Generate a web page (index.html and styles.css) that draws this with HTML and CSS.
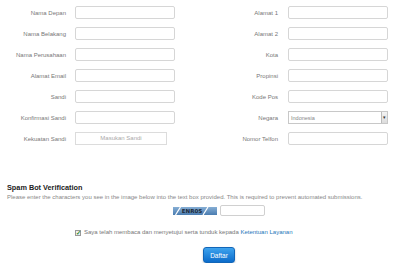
FILE: index.html
```html
<!DOCTYPE html>
<html lang="en">
<head>
    <meta charset="UTF-8">
    <title>Daftar</title>
    <link rel="stylesheet" href="styles.css">
</head>
<body>
    <div class="form-grid">
        <div class="col col-left">
            <div class="row"><label>Nama Depan</label><input type="text"></div>
            <div class="row"><label>Nama Belakang</label><input type="text"></div>
            <div class="row"><label>Nama Perusahaan</label><input type="text"></div>
            <div class="row"><label>Alamat Email</label><input type="text"></div>
            <div class="row"><label>Sandi</label><input type="password"></div>
            <div class="row"><label>Konfirmasi Sandi</label><input type="password"></div>
            <div class="row"><label>Kekuatan Sandi</label><div class="strength">Masukan Sandi</div></div>
        </div>
        <div class="col col-right">
            <div class="row"><label>Alamat 1</label><input type="text"></div>
            <div class="row"><label>Alamat 2</label><input type="text"></div>
            <div class="row"><label>Kota</label><input type="text"></div>
            <div class="row"><label>Propinsi</label><input type="text"></div>
            <div class="row"><label>Kode Pos</label><input type="text"></div>
            <div class="row"><label>Negara</label>
                <div class="select"><span>Indonesia</span><span class="arrow">&#9662;</span></div>
            </div>
            <div class="row"><label>Nomor Telfon</label><input type="text"></div>
        </div>
    </div>

    <div class="spam">
        <h3>Spam Bot Verification</h3>
        <p>Please enter the characters you see in the image below into the text box provided. This is required to prevent automated submissions.</p>
        <div class="captcha-row">
            <svg class="captcha" width="44" height="8" viewBox="0 0 44 8">
                <defs>
                    <linearGradient id="cg" x1="0" y1="0" x2="0" y2="1">
                        <stop offset="0" stop-color="#86aed4"/>
                        <stop offset="1" stop-color="#4a7cb0"/>
                    </linearGradient>
                </defs>
                <rect width="44" height="8" fill="url(#cg)"/>
                <line x1="2.5" y1="8" x2="7.5" y2="0" stroke="#fff" stroke-width="1.2"/>
                <line x1="30" y1="8" x2="35" y2="0" stroke="#fff" stroke-width="1.2"/>
                <text x="19" y="6.3" text-anchor="middle" class="captcha-text">ENR0S</text>
            </svg>
            <input type="text" class="captcha-input">
        </div>
    </div>

    <div class="agree">
        <span class="check">&#10003;</span>
        <span>Saya telah membaca dan menyetujui serta tunduk kepada <a href="#">Ketentuan Layanan</a></span>
    </div>

    <div class="submit">
        <button>Daftar</button>
    </div>
</body>
</html>
```

FILE: styles.css
```css
body {
    margin: 0;
    font-family: "Liberation Sans", Arial, sans-serif;
    font-size: 6px;
    color: #777;
    background: #fff;
}
.form-grid {
    display: grid;
    grid-template-columns: 200px 200px;
    padding-top: 6px;
}
.col {
    display: flex;
    flex-direction: column;
    gap: 8px;
}
.row {
    display: grid;
    grid-template-columns: 66px 100px;
    column-gap: 9px;
    align-items: center;
    height: 13px;
}
.col-right .row {
    grid-template-columns: 78px 100px;
    column-gap: 10px;
}
label {
    text-align: right;
    white-space: nowrap;
}
input {
    box-sizing: border-box;
    height: 13px;
    width: 100%;
    margin: 0;
    border: 1px solid #d6d6d6;
    border-radius: 2px;
    background: #fff;
    padding: 0 2px;
}
.strength {
    box-sizing: border-box;
    width: 92px;
    height: 13px;
    border: 1px solid #dcdcdc;
    text-align: center;
    line-height: 11px;
    color: #aaa;
}
.select {
    box-sizing: border-box;
    height: 13px;
    border: 1px solid #c8c8c8;
    display: flex;
    justify-content: space-between;
    align-items: center;
    padding-left: 2px;
    color: #888;
    font-size: 5.5px;
}
.arrow {
    box-sizing: border-box;
    width: 6px;
    height: 11px;
    border-left: 1px solid #bbb;
    background: linear-gradient(#f4f4f4, #dcdcdc);
    color: #333;
    font-size: 5px;
    line-height: 11px;
    text-align: center;
}
.spam {
    margin-top: 38px;
    padding: 0 7px;
}
.spam h3 {
    margin: 0;
    font-size: 7.3px;
    line-height: 9px;
    color: #222;
}
.spam p {
    margin: 2px 0 0;
    font-size: 6px;
    line-height: 7px;
    color: #888;
    white-space: nowrap;
}
.captcha-row {
    display: flex;
    align-items: center;
    gap: 3px;
    margin-top: 4px;
    padding-left: 166px;
}
.captcha {
    display: block;
}
.captcha-text {
    font-family: "DejaVu Sans", sans-serif;
    font-weight: bold;
    font-size: 5.5px;
    fill: #1d2a3a;
}
.captcha-input {
    width: 45px;
    height: 11px;
    border-color: #d0d0d0;
}
.agree {
    display: flex;
    align-items: center;
    gap: 3px;
    margin-top: 13px;
    padding-left: 75px;
    font-size: 6px;
    line-height: 7px;
    color: #777;
}
.check {
    box-sizing: border-box;
    width: 6px;
    height: 6px;
    border: 1px solid #999;
    background: #eee;
    color: #2a8a2a;
    font-size: 6px;
    line-height: 4px;
    text-align: center;
    font-weight: bold;
}
.agree a {
    color: #2476b8;
    text-decoration: none;
}
.submit {
    display: flex;
    justify-content: center;
    margin-top: 11px;
    padding-left: 38px;
}
.submit button {
    width: 32px;
    height: 16px;
    padding: 0;
    border: 1px solid #1266b8;
    border-radius: 3px;
    background: linear-gradient(#3ea3ee, #0c6ccb);
    color: #fff;
    font-family: "Liberation Sans", Arial, sans-serif;
    font-size: 6.5px;
    box-shadow: 0 1px 2px rgba(0, 0, 0, 0.25);
}
```
